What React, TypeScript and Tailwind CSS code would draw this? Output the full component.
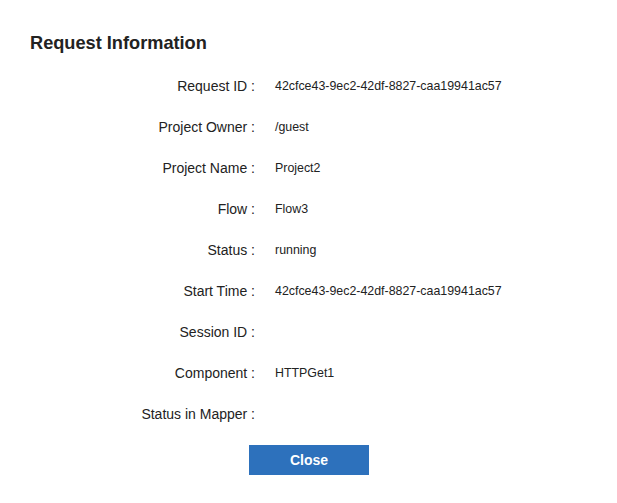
export default function App() {
  const rows: [string, string][] = [
    ["Request ID", "42cfce43-9ec2-42df-8827-caa19941ac57"],
    ["Project Owner", "/guest"],
    ["Project Name", "Project2"],
    ["Flow", "Flow3"],
    ["Status", "running"],
    ["Start Time", "42cfce43-9ec2-42df-8827-caa19941ac57"],
    ["Session ID", ""],
    ["Component", "HTTPGet1"],
    ["Status in Mapper", ""],
  ];
  return (
    <div
      className="w-[617px] h-[503px] bg-white text-[#222]"
      style={{ fontFamily: '"Liberation Sans", Arial, sans-serif' }}
    >
      <div className="pt-[33px] pl-[30px]">
        <h1 className="text-[18.2px] leading-[21px] font-bold">Request Information</h1>
      </div>
      <div className="mt-[11px] flex flex-col">
        {rows.map(([label, value]) => (
          <div key={label} className="flex items-center h-[41px]">
            <div className="w-[255px] text-right text-[14px] leading-[16px]">
              {label} :
            </div>
            <div className="pl-[20px] text-[12.4px] leading-[14px]">{value}</div>
          </div>
        ))}
      </div>
      <div className="mt-[11px] flex justify-center">
        <button className="w-[120px] h-[30px] bg-[#2d71bc] text-white font-bold text-[14px] ml-[1px]">
          Close
        </button>
      </div>
    </div>
  );
}
